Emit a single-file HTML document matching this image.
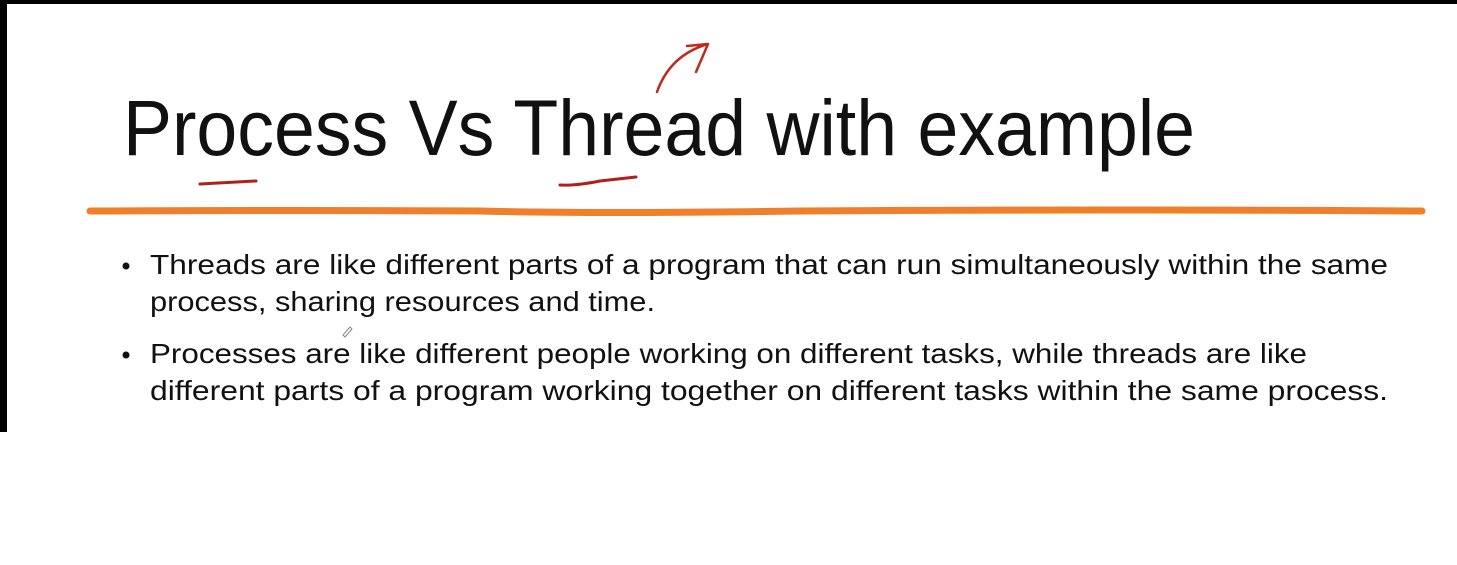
<!DOCTYPE html>
<html><head><meta charset="utf-8"><style>
html,body{margin:0;padding:0;background:#fff;width:1457px;height:565px;overflow:hidden}
svg{display:block}
</style></head><body>
<svg width="1457" height="565" viewBox="0 0 1457 565" xmlns="http://www.w3.org/2000/svg">
<rect x="0" y="0" width="1457" height="565" fill="#fff"/>
<rect x="0" y="0" width="1457" height="4" fill="#000"/>
<rect x="0" y="0" width="7" height="432" fill="#000"/>
<text x="123" y="155" font-family="Liberation Sans, sans-serif" font-size="79" fill="#111" textLength="1072" lengthAdjust="spacingAndGlyphs">Process Vs Thread with example</text>
<path d="M200 184 L256 181" stroke="#b0201a" stroke-width="3" stroke-linecap="round" fill="none"/>
<path d="M560 185 Q575 186 600 181 L636 177" stroke="#b0201a" stroke-width="3" stroke-linecap="round" fill="none"/>
<path d="M657 92 Q670 55 708 44 M708 44 L687 46 M708 44 L696 72" stroke="#c02a1e" stroke-width="2.5" stroke-linecap="round" fill="none"/>
<path d="M90 211 Q300 210 480 211 Q600 214 800 211 Q1100 209 1422 211" stroke="#f07f2c" stroke-width="7" stroke-linecap="round" fill="none"/>
<g font-family="Liberation Sans, sans-serif" font-size="27.5" fill="#111">
<circle cx="126" cy="266" r="3.5" fill="#111"/>
<text x="150" y="274" textLength="1238" lengthAdjust="spacingAndGlyphs">Threads are like different parts of a program that can run simultaneously within the same</text>
<text x="150" y="311" textLength="505" lengthAdjust="spacingAndGlyphs">process, sharing resources and time.</text>
<circle cx="126" cy="355" r="3.5" fill="#111"/>
<text x="150" y="363" textLength="1157" lengthAdjust="spacingAndGlyphs">Processes are like different people working on different tasks, while threads are like</text>
<text x="150" y="400" textLength="1238" lengthAdjust="spacingAndGlyphs">different parts of a program working together on different tasks within the same process.</text>
</g>
<path d="M343 335 L350 327 L352 329 L345 337 Z" stroke="#888" stroke-width="1" fill="none"/>
</svg>
</body></html>
